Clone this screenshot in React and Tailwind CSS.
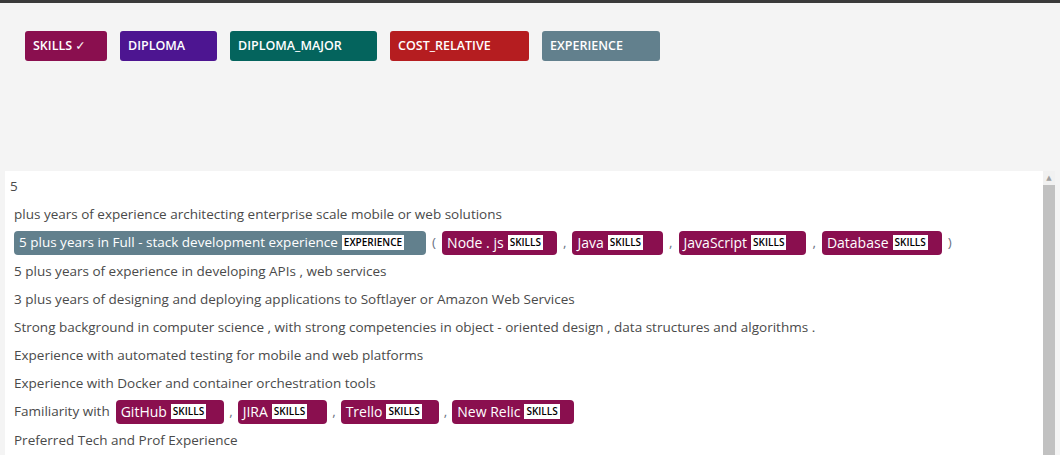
import React from "react"

const font = { fontFamily: "'Open Sans', 'DejaVu Sans', sans-serif" }

function Chip({ text, label, color, pr }) {
  return (
    <span className={`inline-flex items-center h-[24px] rounded-[4px] pl-[5px] text-white text-[14px] ${color} ${pr}`}>
      {text}
      <span className="ml-[4px] bg-white text-black text-[10px] font-semibold px-[2px] leading-[15px]">{label}</span>
    </span>
  )
}

function Sep({ c }) {
  return <span className="mx-[6px] text-gray-500">{c}</span>
}

export default function App() {
  const buttons = [
    { t: "SKILLS ✓", c: "bg-[#8a0f4f]", w: "w-[82px]" },
    { t: "DIPLOMA", c: "bg-[#4d1591]", w: "w-[97px]" },
    { t: "DIPLOMA_MAJOR", c: "bg-[#04645d]", w: "w-[147px]" },
    { t: "COST_RELATIVE", c: "bg-[#b51d20]", w: "w-[139px]" },
    { t: "EXPERIENCE", c: "bg-[#62808d]", w: "w-[118px]" },
  ]
  const rows = [
    "5 plus years of experience in developing APIs , web services",
    "3 plus years of designing and deploying applications to Softlayer or Amazon Web Services",
    "Strong background in computer science , with strong competencies in object - oriented design , data structures and algorithms .",
    "Experience with automated testing for mobile and web platforms",
    "Experience with Docker and container orchestration tools",
  ]
  return (
    <div style={font} className="w-[1060px] h-[455px] overflow-hidden bg-[#f4f4f4] flex flex-col">
      <div className="h-[3px] bg-[#3a3a3a]" />
      <div className="h-[168px] flex gap-[13px] pl-[25px] pt-[28px] items-start">
        {buttons.map((b) => (
          <div key={b.t} className={`${b.c} ${b.w} h-[30px] rounded-[3px] text-white text-[12.5px] font-semibold flex items-center pl-[8px]`}>
            {b.t}
          </div>
        ))}
      </div>
      <div className="flex flex-1 pl-[5px] pr-[5px]">
        <div className="flex-1 bg-white text-[#4a4a4a] text-[13.5px] pt-[1px]">
          <div className="pl-[5px] h-[28px] leading-[28px]">5</div>
          <div className="pl-[9px] h-[28px] leading-[28px]">plus years of experience architecting enterprise scale mobile or web solutions</div>
          <div className="pl-[9px] h-[29px] flex items-center">
            <span className="inline-flex items-center h-[24px] rounded-[4px] pl-[5px] pr-[22px] text-white text-[13.5px] bg-[#62808d]">
              5 plus years in Full - stack development experience
              <span className="ml-[4px] bg-white text-black text-[10px] font-semibold px-[2px] leading-[15px]">EXPERIENCE</span>
            </span>
            <Sep c="(" />
            <Chip text="Node . js" label="SKILLS" color="bg-[#8a0f4f]" pr="pr-[14px]" />
            <Sep c="," />
            <Chip text="Java" label="SKILLS" color="bg-[#8a0f4f]" pr="pr-[20px]" />
            <Sep c="," />
            <Chip text="JavaScript" label="SKILLS" color="bg-[#8a0f4f]" pr="pr-[20px]" />
            <Sep c="," />
            <Chip text="Database" label="SKILLS" color="bg-[#8a0f4f]" pr="pr-[14px]" />
            <Sep c=")" />
          </div>
          {rows.map((r) => (
            <div key={r} className="pl-[9px] h-[28px] leading-[28px]">{r}</div>
          ))}
          <div className="pl-[9px] h-[29px] flex items-center">
            <span className="mr-[6px]">Familiarity with</span>
            <Chip text="GitHub" label="SKILLS" color="bg-[#8a0f4f]" pr="pr-[18px]" />
            <span className="mx-[5px] text-gray-500">,</span>
            <Chip text="JIRA" label="SKILLS" color="bg-[#8a0f4f]" pr="pr-[20px]" />
            <span className="mx-[5px] text-gray-500">,</span>
            <Chip text="Trello" label="SKILLS" color="bg-[#8a0f4f]" pr="pr-[17px]" />
            <span className="mx-[5px] text-gray-500">,</span>
            <Chip text="New Relic" label="SKILLS" color="bg-[#8a0f4f]" pr="pr-[14px]" />
          </div>
          <div className="pl-[9px] h-[28px] leading-[28px]">Preferred Tech and Prof Experience</div>
        </div>
        <div className="w-[12px] bg-[#f1f1f1] flex flex-col">
          <div className="h-[14px] flex items-center justify-center text-[7px] text-[#a0a0a0]">▲</div>
          <div className="flex-1 bg-[#c1c1c1]" />
        </div>
      </div>
    </div>
  )
}
